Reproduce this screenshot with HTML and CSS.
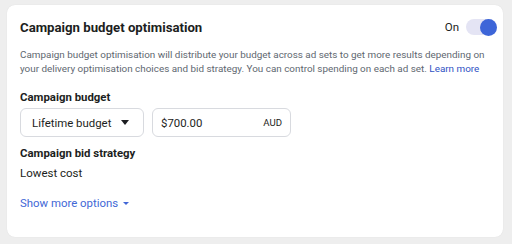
FILE: index.html
```
<!DOCTYPE html>
<html lang="en">
<head>
    <meta charset="UTF-8">
    <meta name="viewport" content="width=device-width, initial-scale=1.0">
    <title>Campaign budget optimisation</title>
    <link rel="stylesheet" href="styles.css">
</head>
<body>

    <div class="card">
        <!-- Header with toggle -->
        <div class="card-header">
            <div class="title">Campaign budget optimisation</div>
            <div class="switch-wrap">
                <span class="switch-label">On</span>
                <div class="switch"><div class="knob"></div></div>
            </div>
        </div>

        <p class="desc">
            Campaign budget optimisation will distribute your budget across ad sets to get more results depending on
            your delivery optimisation choices and bid strategy. You can control spending on each ad set.
            <a href="#" class="link">Learn more</a>
        </p>

        <div class="label">Campaign budget</div>
        <div class="budget-row">
            <div class="select">
                <span>Lifetime budget</span>
                <span class="caret"></span>
            </div>
            <div class="money">
                <span>$700.00</span>
                <span class="currency">AUD</span>
            </div>
        </div>

        <div class="label bid-label">Campaign bid strategy</div>
        <div class="value">Lowest cost</div>

        <a href="#" class="more">Show more options <span class="small-caret"></span></a>
    </div>

</body>
</html>
```

FILE: styles.css
```
body {
    font-family: Roboto, "Liberation Sans", sans-serif;
    margin: 0;
    padding: 5px 9px 7px 7px;
    background: #eeeeee;
    color: #1c1e21;
}

.card {
    background: white;
    border-radius: 8px;
    box-shadow: 0 0 1px rgba(0, 0, 0, 0.12);
    height: 232px;
    box-sizing: border-box;
    padding: 12px 6px 0 13px;
}

.card-header {
    display: flex;
    justify-content: space-between;
    align-items: center;
    height: 20px;
}

.title {
    font-size: 13.2px;
    font-weight: bold;
}

.switch-wrap {
    display: flex;
    align-items: center;
    gap: 7px;
}

.switch-label {
    font-size: 11.5px;
}

.switch {
    width: 31px;
    height: 16px;
    border-radius: 8px;
    background: #e4e4f4;
    position: relative;
}

.knob {
    position: absolute;
    right: 0;
    top: -0.5px;
    width: 17px;
    height: 17px;
    border-radius: 50%;
    background: #3d65d8;
}

.desc {
    margin: 11px 0 0 0;
    font-size: 9.9px;
    line-height: 14px;
    color: #606770;
}

.link {
    color: #2f52c4;
    text-decoration: none;
}

.label {
    margin-top: 13px;
    font-size: 11.4px;
    font-weight: bold;
    line-height: 16px;
}

.budget-row {
    display: flex;
    gap: 8px;
    margin-top: 3px;
}

.select,
.money {
    height: 29px;
    box-sizing: border-box;
    border: 1px solid #d8dadf;
    border-radius: 6px;
    display: flex;
    align-items: center;
    justify-content: space-between;
    font-size: 11.4px;
}

.select {
    width: 124px;
    padding: 0 14px 0 11px;
}

.caret {
    width: 0;
    height: 0;
    border-left: 4px solid transparent;
    border-right: 4px solid transparent;
    border-top: 5px solid #1c1e21;
}

.money {
    width: 139px;
    padding: 0 8px;
}

.currency {
    font-size: 9.6px;
}

.bid-label {
    margin-top: 8px;
}

.value {
    margin-top: 4px;
    font-size: 11.5px;
    line-height: 16px;
}

.more {
    display: inline-flex;
    align-items: center;
    gap: 5px;
    margin-top: 14px;
    font-size: 11.4px;
    line-height: 16px;
    color: #4267d6;
    text-decoration: none;
}

.small-caret {
    width: 0;
    height: 0;
    border-left: 3px solid transparent;
    border-right: 3px solid transparent;
    border-top: 3px solid #4267d6;
}
```
